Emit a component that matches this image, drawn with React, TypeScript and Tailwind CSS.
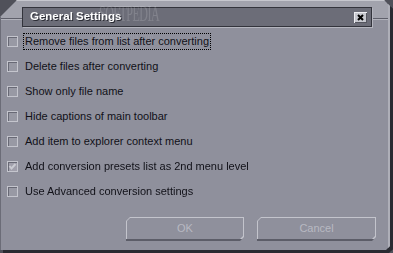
import React from "react";

const items = [
  { label: "Remove files from list after converting", checked: false, focus: true },
  { label: "Delete files after converting", checked: false, focus: false },
  { label: "Show only file name", checked: false, focus: false },
  { label: "Hide captions of main toolbar", checked: false, focus: false },
  { label: "Add item to explorer context menu", checked: false, focus: false },
  { label: "Add conversion presets list as 2nd menu level", checked: true, focus: false },
  { label: "Use Advanced conversion settings", checked: false, focus: false },
];

function CheckBox({ checked }: { checked: boolean }) {
  return (
    <div
      className={
        "w-[11px] h-[11px] shrink-0 border border-[#c4c5cd] shadow-[inset_1px_1px_0_#686975] flex items-center justify-center " +
        (checked ? "bg-[#a09fab]" : "bg-[#9899a4]")
      }
    >
      {checked && (
        <svg width="9" height="9" viewBox="0 0 9 9">
          <polyline points="1.5,4 3.5,6.5 7.5,2" fill="none" stroke="#c9cad1" strokeWidth="2" />
        </svg>
      )}
    </div>
  );
}

function Btn({ label, w }: { label: string; w: string }) {
  return (
    <div
      className={
        w +
        " h-[24px] pt-px pl-px pr-px pb-[2px] [clip-path:polygon(4px_0,100%_0,100%_calc(100%-4px),calc(100%-4px)_100%,0_100%,0_4px)] bg-[linear-gradient(to_bottom,#c3c4cc_calc(100%-2px),#5c5d68_calc(100%-2px))]"
      }
    >
      <div className="h-full w-full bg-[#8f909c] [clip-path:polygon(3px_0,100%_0,100%_calc(100%-3px),calc(100%-3px)_100%,0_100%,0_3px)] flex items-center justify-center text-[11px] text-[#b8b9c2]">
        {label}
      </div>
    </div>
  );
}

export default function App() {
  return (
    <div className="w-[393px] h-[253px] bg-[#50515a] overflow-hidden font-['Liberation_Sans',Arial,sans-serif]">
      <div className="drop-shadow-[3px_3px_0_#2a2b32]">
        <div className="relative w-[390px] h-[250px] flex flex-col [clip-path:polygon(17px_0,384px_0,390px_6px,390px_246px,386px_250px,0_250px,0_17px)] bg-[linear-gradient(to_bottom,#a2a3ad_18px,#5e5f6a_18px,#5e5f6a_19px,#b1b2bb_19px,#b1b2bb_20px,#8f909c_20px)] shadow-[inset_0_1px_0_#c6c7ce,inset_1px_0_0_#6b6c77,inset_-2px_0_0_#aeafb8]">
          {/* title bar */}
          <div className="relative mt-[7px] ml-[22px] w-[350px] h-[20px] shrink-0 bg-[#6c6d78] border border-[#33343c] shadow-[1px_1px_0_#b4b5be] flex items-center justify-between">
            <span className="relative z-10 pl-[7px] text-[11.5px] font-bold text-white [text-shadow:1px_1px_0_#2c2d35] leading-none">
              General Settings
            </span>
            <div className="mr-[4px] w-[13px] h-[11px] bg-[#c8c9d0] shadow-[inset_1px_1px_0_#eeeef2,inset_-1px_-1px_0_#55565f] flex items-center justify-center">
              <svg width="7" height="7" viewBox="0 0 7 7">
                <path d="M1 1 L6 6 M6 1 L1 6" stroke="#000" strokeWidth="2" />
              </svg>
            </div>
            {/* watermark */}
            <div className="absolute left-[76px] top-[-7px] pointer-events-none text-[24px] font-['Liberation_Serif',serif] text-white/15 tracking-[-1px] scale-x-[0.5] origin-left leading-none">
              SOFTPEDIA
            </div>
          </div>

          <div className="absolute left-[93px] top-[32px] text-[7px] text-white/10 pointer-events-none">
            www.softpedia.com
          </div>

          {/* options */}
          <div className="mt-[2px] flex flex-col">
            {items.map((it) => (
              <div key={it.label} className="h-[25px] flex items-center">
                <div className="ml-[7px]">
                  <CheckBox checked={it.checked} />
                </div>
                <span
                  className={
                    "ml-[5px] px-[1px] h-[17px] flex items-center text-[11px] text-[#111118] border border-dotted " +
                    (it.focus ? "border-[#000000]" : "border-transparent")
                  }
                >
                  {it.label}
                </span>
              </div>
            ))}
          </div>

          {/* buttons */}
          <div className="mt-[13px] flex justify-end gap-[13px] pr-[14px]">
            <Btn label="OK" w="w-[118px]" />
            <Btn label="Cancel" w="w-[119px]" />
          </div>
        </div>
      </div>
    </div>
  );
}
